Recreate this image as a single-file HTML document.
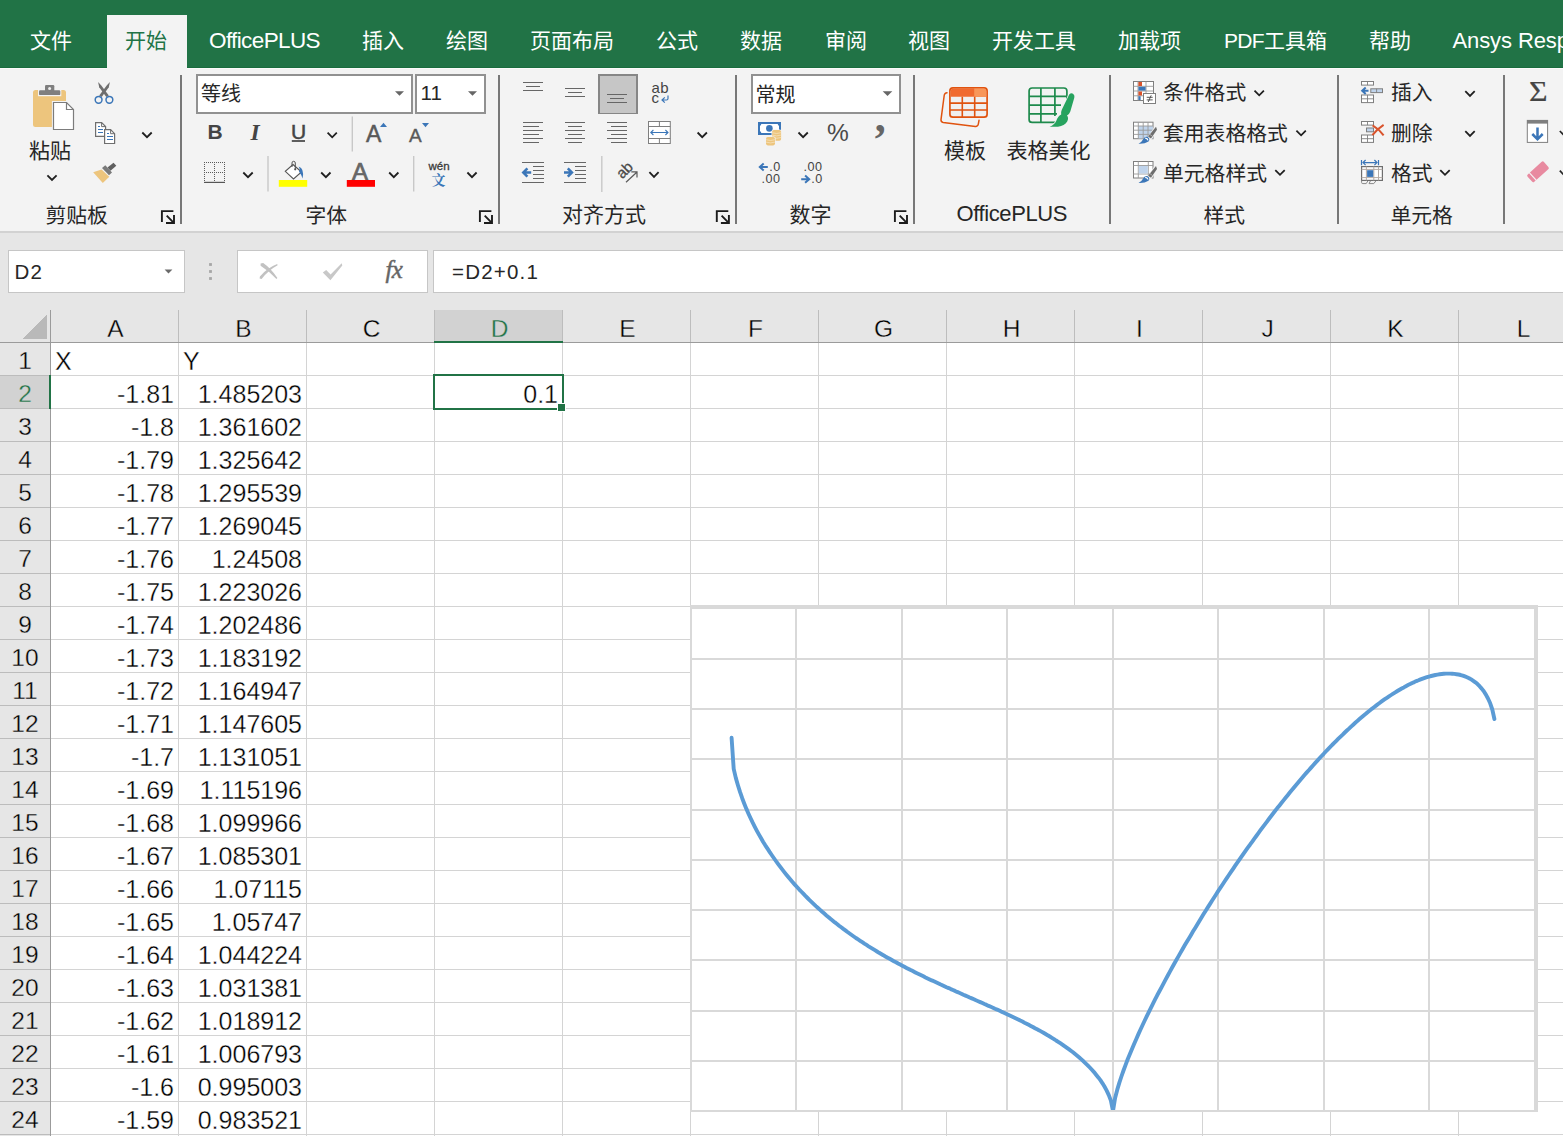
<!DOCTYPE html>
<html lang="zh-CN">
<head>
<meta charset="utf-8">
<title>Excel</title>
<style>
html,body{margin:0;padding:0;}
body{width:1563px;height:1136px;overflow:hidden;position:relative;background:#fff;
 font-family:"Liberation Sans","Noto Sans CJK SC",sans-serif;color:#262626;}
.abs{position:absolute;}
.t{position:absolute;white-space:nowrap;line-height:1;}
#tabbar{position:absolute;left:0;top:0;width:1563px;height:68px;background:#217346;}
#tabbar .tab{position:absolute;top:26.5px;font-size:21px;line-height:28px;color:#fff;white-space:nowrap;}
#acttab{position:absolute;left:107px;top:15px;width:80px;height:53px;background:#f3f3f3;}
#ribbon{position:absolute;left:0;top:68px;width:1563px;height:163px;background:#f3f3f3;}
#ribline{position:absolute;left:0;top:231px;width:1563px;height:2px;background:#d2d2d2;}
#fbar{position:absolute;left:0;top:233px;width:1563px;height:77px;background:#e6e6e6;}
.rt{position:absolute;white-space:nowrap;font-size:21px;line-height:28px;color:#262626;}
.gl{position:absolute;white-space:nowrap;font-size:20.8px;line-height:28px;color:#262626;}
.box{position:absolute;background:#fff;border:2px solid #919191;box-sizing:border-box;}
#grid{position:absolute;left:0;top:310px;width:1563px;height:826px;background:#fff;}
.ch{position:absolute;top:0;height:32px;font-size:24.5px;line-height:38px;text-align:center;color:#000;width:128px;}
.rh{position:absolute;left:0;width:50px;height:33px;font-size:24.5px;line-height:36px;text-align:center;color:#000;}
.c{position:absolute;height:33px;font-size:25px;line-height:36px;color:#000;white-space:nowrap;}
.r{text-align:right;}
.c{-webkit-text-stroke:0.35px #fff;}
.rh,.ch{-webkit-text-stroke:0.35px #e6e6e6;}
</style>
</head>
<body>
<div id="tabbar">
<div class="abs" style="left:0;top:67px;width:1563px;height:1px;background:#196c3d"></div>
<div id="acttab"></div>
<div class="tab" style="left:30px">文件</div>
<div class="tab" style="left:125px;color:#217346;top:27px">开始</div>
<div class="tab" style="left:209px;font-size:22.5px;letter-spacing:-0.62px">OfficePLUS</div>
<div class="tab" style="left:362px">插入</div>
<div class="tab" style="left:446px">绘图</div>
<div class="tab" style="left:530px">页面布局</div>
<div class="tab" style="left:656px">公式</div>
<div class="tab" style="left:740px">数据</div>
<div class="tab" style="left:825px">审阅</div>
<div class="tab" style="left:908px">视图</div>
<div class="tab" style="left:992px">开发工具</div>
<div class="tab" style="left:1118px">加载项</div>
<div class="tab" style="left:1224px"><span style="letter-spacing:-0.7px">PDF</span>工具箱</div>
<div class="tab" style="left:1369px">帮助</div>
<div class="tab" style="left:1452.5px;font-size:22px;letter-spacing:-0.1px">Ansys Response</div>
</div>
<div id="ribbon"></div>
<div class="abs" style="left:0;top:68px;width:107px;height:1px;background:#fbfbfb"></div><div class="abs" style="left:187px;top:68px;width:1376px;height:1px;background:#fbfbfb"></div>
<div id="ribline"></div>
<div id="fbar"></div>
<!-- ribbon text -->
<div class="rt" style="left:29px;top:137px">粘贴</div>
<div class="gl" style="left:45.5px;top:201.5px">剪贴板</div>
<div class="box" style="left:196px;top:74px;width:217px;height:40px"></div>
<div class="box" style="left:415px;top:74px;width:71px;height:40px"></div>
<div class="t" style="left:201px;top:80px;font-size:20px;line-height:28px;color:#262626">等线</div>
<div class="t" style="left:420.5px;top:79px;font-size:20.5px;line-height:28px;color:#262626">11</div>
<div class="t" style="left:207.5px;top:118px;font-size:21px;line-height:28px;font-weight:bold;color:#444">B</div>
<div class="t" style="left:250.5px;top:117.5px;font-size:23.5px;line-height:28px;font-weight:bold;font-style:italic;font-family:'Liberation Serif',serif;color:#444">I</div>
<div class="t" style="left:291px;top:118px;font-size:21px;line-height:28px;color:#444;-webkit-text-stroke:0.5px #444">U</div>
<div class="t" style="left:366px;top:120px;font-size:23px;line-height:28px;color:#595959;-webkit-text-stroke:0.5px #595959">A</div>
<div class="t" style="left:409px;top:122px;font-size:19px;line-height:28px;color:#595959;-webkit-text-stroke:0.4px #595959">A</div>
<div class="t" style="left:352px;top:158px;font-size:24px;line-height:28px;color:#666;-webkit-text-stroke:0.7px #666">A</div>
<div class="t" style="left:428.5px;top:159px;font-size:11.5px;line-height:14px;color:#3a3a3a;-webkit-text-stroke:0.3px #3a3a3a">wén</div>
<div class="t" style="left:431.5px;top:170px;font-size:14px;line-height:18px;font-weight:bold;color:#3b76b8;font-family:'Noto Serif CJK SC','Liberation Serif',serif">文</div>
<div class="gl" style="left:305.5px;top:201.5px">字体</div>
<div class="t" style="left:651.5px;top:79px;font-size:15px;line-height:18px;color:#444;letter-spacing:0.3px">ab</div>
<div class="t" style="left:651.5px;top:89px;font-size:15px;line-height:18px;color:#444">c</div>
<div class="gl" style="left:562px;top:201px;font-size:21px">对齐方式</div>
<div class="box" style="left:751px;top:74px;width:150px;height:40px"></div>
<div class="t" style="left:755.5px;top:81px;font-size:20px;line-height:28px;color:#262626">常规</div>
<div class="t" style="left:827px;top:119px;font-size:24.5px;line-height:28px;color:#4a4a4a">%</div>
<div class="t" style="left:874.8px;top:96px;font-size:44px;line-height:44px;font-weight:bold;font-family:'Liberation Serif',serif;color:#666">,</div>
<div class="gl" style="left:789.5px;top:201px;font-size:21px">数字</div>
<div class="rt" style="left:944px;top:137px">模板</div>
<div class="rt" style="left:1006.5px;top:137px">表格美化</div>
<div class="gl" style="left:956.5px;top:200px;font-size:22px;letter-spacing:-0.4px">OfficePLUS</div>
<div class="rt" style="left:1163px;top:79px;font-size:20.8px">条件格式</div>
<div class="rt" style="left:1163px;top:120px;font-size:20.8px">套用表格格式</div>
<div class="rt" style="left:1163px;top:160px;font-size:20.8px">单元格样式</div>
<div class="gl" style="left:1203.5px;top:201.5px">样式</div>
<div class="rt" style="left:1391px;top:79px;font-size:20.8px">插入</div>
<div class="rt" style="left:1391px;top:120px;font-size:20.8px">删除</div>
<div class="rt" style="left:1391px;top:160px;font-size:20.8px">格式</div>
<div class="gl" style="left:1390.5px;top:201.5px">单元格</div>
<div class="t" style="left:1528.5px;top:74.5px;font-size:29px;line-height:32px;color:#444;-webkit-text-stroke:0.2px #444;transform:scaleX(1.1);transform-origin:0 0;font-family:'Liberation Serif',serif">Σ</div>
<!-- formula bar -->
<div class="abs" style="left:8px;top:250px;width:177px;height:43px;background:#fff;border:1px solid #c6c6c6;box-sizing:border-box"></div>
<div class="t" style="left:14.5px;top:258px;font-size:20.5px;line-height:28px;color:#262626;letter-spacing:1.2px">D2</div>
<div class="abs" style="left:237px;top:250px;width:191px;height:43px;background:#fff;border:1px solid #c6c6c6;box-sizing:border-box"></div>
<div class="abs" style="left:433px;top:250px;width:1140px;height:43px;background:#fff;border:1px solid #c6c6c6;box-sizing:border-box"></div>
<div class="t" style="left:452px;top:258px;font-size:20.5px;line-height:28px;color:#262626;letter-spacing:1.2px">=D2+0.1</div>
<div class="t" style="left:385.5px;top:254.5px;font-size:25px;line-height:30px;color:#666;font-family:'Liberation Serif',serif;font-style:italic;-webkit-text-stroke:0.45px #666;letter-spacing:-0.6px">fx</div>
<svg class="abs" style="left:0;top:0" width="1563" height="310" viewBox="0 0 1563 310">
<rect x="180" y="75" width="2" height="149" fill="#777" shape-rendering="crispEdges"/>
<rect x="498" y="75" width="2" height="149" fill="#777" shape-rendering="crispEdges"/>
<rect x="735" y="75" width="2" height="149" fill="#777" shape-rendering="crispEdges"/>
<rect x="913" y="75" width="2" height="149" fill="#777" shape-rendering="crispEdges"/>
<rect x="1109" y="75" width="2" height="149" fill="#777" shape-rendering="crispEdges"/>
<rect x="1337" y="75" width="2" height="149" fill="#777" shape-rendering="crispEdges"/>
<rect x="1503" y="75" width="2" height="149" fill="#777" shape-rendering="crispEdges"/>
<line x1="352.3" y1="116.5" x2="352.3" y2="151.5" stroke="#c8c8c8" stroke-width="1.4"/>
<line x1="268" y1="156" x2="268" y2="191.5" stroke="#c8c8c8" stroke-width="1.4"/>
<line x1="413.7" y1="156" x2="413.7" y2="191.5" stroke="#c8c8c8" stroke-width="1.4"/>
<line x1="601.8" y1="156" x2="601.8" y2="192" stroke="#c8c8c8" stroke-width="1.4"/>
<path d="M161.9,222.1 V211.1 H173.4" fill="none" stroke="#1c1c1c" stroke-width="1.9"/>
<path d="M166.7,215.7 L173.8,222.8 M166.0,223.0 H174.0 V215.0" fill="none" stroke="#1c1c1c" stroke-width="1.9"/>
<path d="M479.9,222.1 V211.1 H491.4" fill="none" stroke="#1c1c1c" stroke-width="1.9"/>
<path d="M484.7,215.7 L491.8,222.8 M484.0,223.0 H492.0 V215.0" fill="none" stroke="#1c1c1c" stroke-width="1.9"/>
<path d="M716.8,222.1 V211.1 H728.3" fill="none" stroke="#1c1c1c" stroke-width="1.9"/>
<path d="M721.6,215.7 L728.7,222.8 M720.9,223.0 H728.9 V215.0" fill="none" stroke="#1c1c1c" stroke-width="1.9"/>
<path d="M894.9,222.1 V211.1 H906.4" fill="none" stroke="#1c1c1c" stroke-width="1.9"/>
<path d="M899.7,215.7 L906.8,222.8 M899.0,223.0 H907.0 V215.0" fill="none" stroke="#1c1c1c" stroke-width="1.9"/>
<rect x="33" y="90" width="33" height="37" rx="2.5" fill="#edc57d"/>
<rect x="38" y="89" width="23.3" height="7.2" fill="#f3f3f3"/>
<rect x="39" y="90.3" width="21.3" height="4.8" rx="1.2" fill="#7f7f7f"/><rect x="45" y="85" width="9.3" height="7" rx="1.2" fill="#7f7f7f"/><circle cx="49.6" cy="88.5" r="1.5" fill="#f0f0f0"/>
<path d="M53.5,102.5 H66.5 L73.5,109.5 V129.5 H53.5 Z" fill="#fff" stroke="#f3f3f3" stroke-width="3.2"/>
<path d="M53.5,102.5 H66.5 L73.5,109.5 V129.5 H53.5 Z" fill="#fff" stroke="#7c7c7c" stroke-width="1.2"/><path d="M66.5,102.5 V109.5 H73.5" fill="none" stroke="#7c7c7c" stroke-width="1.2"/>
<polyline points="47.4,175.3 52.0,180.0 56.6,175.3" fill="none" stroke="#1f1f1f" stroke-width="1.8"/>
<path d="M98.1,82.1 L101.3,85.6 L108.8,95.6 L106.3,97 L99.2,87.3 Z" fill="#6e6e6e"/>
<path d="M109.9,82.1 L106.7,85.6 L99.2,95.6 L101.7,97 L108.8,87.3 Z" fill="#6e6e6e"/>
<circle cx="98.6" cy="99.8" r="3.4" fill="none" stroke="#3b76b8" stroke-width="1.5"/><circle cx="109.4" cy="99.8" r="3.4" fill="none" stroke="#3b76b8" stroke-width="1.5"/>
<path d="M95.6,122.6 H101.6 L105.6,126.6 V136.4 H95.6 Z" fill="#fff" stroke="#6e6e6e" stroke-width="1.2"/><path d="M101.6,122.6 V126.6 H105.6" fill="none" stroke="#6e6e6e" stroke-width="1"/>
<line x1="97.5" y1="126.5" x2="100" y2="126.5" stroke="#3b76b8" stroke-width="1" shape-rendering="crispEdges"/>
<line x1="97.5" y1="129.5" x2="103.2" y2="129.5" stroke="#3b76b8" stroke-width="1" shape-rendering="crispEdges"/>
<line x1="97.5" y1="132.5" x2="103.2" y2="132.5" stroke="#3b76b8" stroke-width="1" shape-rendering="crispEdges"/>
<path d="M104.6,129.7 H110.6 L114.6,133.7 V143.5 H104.6 Z" fill="#fff" stroke="#6e6e6e" stroke-width="1.2"/><path d="M110.6,129.7 V133.7 H114.6" fill="none" stroke="#6e6e6e" stroke-width="1"/>
<line x1="106.5" y1="133.5" x2="109" y2="133.5" stroke="#3b76b8" stroke-width="1" shape-rendering="crispEdges"/>
<line x1="106.5" y1="136.5" x2="112.5" y2="136.5" stroke="#3b76b8" stroke-width="1" shape-rendering="crispEdges"/>
<line x1="106.5" y1="139.5" x2="112.5" y2="139.5" stroke="#3b76b8" stroke-width="1" shape-rendering="crispEdges"/>
<polyline points="142.3,132.5 147.0,137.2 151.7,132.5" fill="none" stroke="#1f1f1f" stroke-width="1.8"/>
<path d="M93.2,172.3 L101.5,169.5 L109.3,176.8 L102.8,183 Z" fill="#edc57d"/>
<path d="M102,168 L105.3,165.3 L112,172.5 L109,175.3 Z" fill="#7a7a7a"/>
<path d="M107.5,167.5 L113.5,162.8 L116.3,165.8 L110.5,170.8 Z" fill="#5f5f5f"/>
<polygon points="395,91.2 404,91.2 399.5,95.8" fill="#666"/>
<polygon points="468,91.2 477,91.2 472.5,95.8" fill="#666"/>
<line x1="291.8" y1="141" x2="305" y2="141" stroke="#444" stroke-width="1.7"/>
<polyline points="327.6,132.7 332.2,137.3 336.8,132.7" fill="none" stroke="#1f1f1f" stroke-width="1.8"/>
<polygon points="380,127 387,127 383.5,122.8" fill="#3b76b8"/>
<polygon points="422,123 429,123 425.5,127.2" fill="#3b76b8"/>
<g stroke="#5a5a5a" stroke-width="1" stroke-dasharray="1 1" fill="none" shape-rendering="crispEdges"><path d="M204,162.5 H225 M204,172.5 H225 M204.5,162 V182 M214.5,162 V182 M224.5,162 V182"/></g>
<line x1="204" y1="182.4" x2="225" y2="182.4" stroke="#555" stroke-width="1.2"/>
<polyline points="243.3,172.5 248.0,177.2 252.7,172.5" fill="none" stroke="#1f1f1f" stroke-width="1.8"/>
<rect x="278.8" y="180" width="28.4" height="6.8" fill="#ffff00"/>
<path d="M293,164.5 L301.5,172 L293.5,179 L285.3,171.3 Z" fill="#fff" stroke="#555" stroke-width="1.1"/>
<path d="M292,167 V163 Q292,161.3 293.6,161.3 Q295.3,161.3 295.3,163 V169" fill="none" stroke="#555" stroke-width="1"/>
<circle cx="295.2" cy="169.3" r="1.1" fill="#555"/>
<path d="M298.6,166.6 Q304.6,168.6 302.6,178.4 Q301.2,174.5 299,171.6 Q300.5,169.5 298.6,166.6 Z" fill="#3b76b8"/>
<polyline points="321.2,172.5 325.9,177.2 330.5,172.5" fill="none" stroke="#1f1f1f" stroke-width="1.8"/>
<rect x="346.8" y="180" width="28.2" height="6.8" fill="#ff0000"/>
<polyline points="389.2,172.5 393.8,177.2 398.4,172.5" fill="none" stroke="#1f1f1f" stroke-width="1.8"/>
<polyline points="467.4,172.5 472.0,177.2 476.6,172.5" fill="none" stroke="#1f1f1f" stroke-width="1.8"/>
<g shape-rendering="crispEdges">
<line x1="523" y1="82.5" x2="543" y2="82.5" stroke="#666" stroke-width="1"/>
<line x1="526" y1="86.5" x2="540" y2="86.5" stroke="#666" stroke-width="1"/>
<line x1="523" y1="90.5" x2="543" y2="90.5" stroke="#666" stroke-width="1"/>
<line x1="565" y1="88.5" x2="585" y2="88.5" stroke="#666" stroke-width="1"/>
<line x1="568" y1="92.5" x2="582" y2="92.5" stroke="#666" stroke-width="1"/>
<line x1="565" y1="96.5" x2="585" y2="96.5" stroke="#666" stroke-width="1"/>
<rect x="598.8" y="74.8" width="38.4" height="38.6" fill="#c6c6c6" stroke="#868686" stroke-width="1.6"/>
<line x1="607" y1="94.5" x2="627" y2="94.5" stroke="#666" stroke-width="1"/>
<line x1="610" y1="98.5" x2="624" y2="98.5" stroke="#666" stroke-width="1"/>
<line x1="607" y1="102.5" x2="627" y2="102.5" stroke="#666" stroke-width="1"/>
<line x1="523" y1="122.5" x2="543" y2="122.5" stroke="#666" stroke-width="1"/>
<line x1="565" y1="122.5" x2="585" y2="122.5" stroke="#666" stroke-width="1"/>
<line x1="607" y1="122.5" x2="627" y2="122.5" stroke="#666" stroke-width="1"/>
<line x1="523" y1="126.5" x2="539" y2="126.5" stroke="#666" stroke-width="1"/>
<line x1="568" y1="126.5" x2="582" y2="126.5" stroke="#666" stroke-width="1"/>
<line x1="611" y1="126.5" x2="627" y2="126.5" stroke="#666" stroke-width="1"/>
<line x1="523" y1="130.5" x2="543" y2="130.5" stroke="#666" stroke-width="1"/>
<line x1="565" y1="130.5" x2="585" y2="130.5" stroke="#666" stroke-width="1"/>
<line x1="607" y1="130.5" x2="627" y2="130.5" stroke="#666" stroke-width="1"/>
<line x1="523" y1="134.5" x2="539" y2="134.5" stroke="#666" stroke-width="1"/>
<line x1="568" y1="134.5" x2="582" y2="134.5" stroke="#666" stroke-width="1"/>
<line x1="611" y1="134.5" x2="627" y2="134.5" stroke="#666" stroke-width="1"/>
<line x1="523" y1="138.5" x2="543" y2="138.5" stroke="#666" stroke-width="1"/>
<line x1="565" y1="138.5" x2="585" y2="138.5" stroke="#666" stroke-width="1"/>
<line x1="607" y1="138.5" x2="627" y2="138.5" stroke="#666" stroke-width="1"/>
<line x1="523" y1="142.5" x2="539" y2="142.5" stroke="#666" stroke-width="1"/>
<line x1="568" y1="142.5" x2="582" y2="142.5" stroke="#666" stroke-width="1"/>
<line x1="611" y1="142.5" x2="627" y2="142.5" stroke="#666" stroke-width="1"/>
<line x1="522" y1="162.5" x2="544" y2="162.5" stroke="#666" stroke-width="1"/>
<line x1="564" y1="162.5" x2="586" y2="162.5" stroke="#666" stroke-width="1"/>
<line x1="533" y1="166.5" x2="544" y2="166.5" stroke="#666" stroke-width="1"/>
<line x1="575" y1="166.5" x2="586" y2="166.5" stroke="#666" stroke-width="1"/>
<line x1="533" y1="170.5" x2="544" y2="170.5" stroke="#666" stroke-width="1"/>
<line x1="575" y1="170.5" x2="586" y2="170.5" stroke="#666" stroke-width="1"/>
<line x1="533" y1="174.5" x2="544" y2="174.5" stroke="#666" stroke-width="1"/>
<line x1="575" y1="174.5" x2="586" y2="174.5" stroke="#666" stroke-width="1"/>
<line x1="533" y1="178.5" x2="544" y2="178.5" stroke="#666" stroke-width="1"/>
<line x1="575" y1="178.5" x2="586" y2="178.5" stroke="#666" stroke-width="1"/>
<line x1="522" y1="182.5" x2="544" y2="182.5" stroke="#666" stroke-width="1"/>
<line x1="564" y1="182.5" x2="586" y2="182.5" stroke="#666" stroke-width="1"/>
</g>
<path d="M668,95.5 V98.5 Q668,100 666.5,100 H662.2 M664.8,97.4 L662,100 L664.8,102.6" fill="none" stroke="#3b76b8" stroke-width="1.2"/>
<rect x="648.5" y="121.5" width="21.8" height="22" fill="#fff" stroke="#7f7f7f" stroke-width="1"/>
<path d="M648.5,126.5 H670.3 M648.5,138.5 H670.3 M659.4,121.5 V126.5 M659.4,138.5 V143.5" stroke="#7f7f7f" stroke-width="1" fill="none"/>
<path d="M650.8,132.5 H668 M653.4,130 L650.8,132.5 L653.4,135 M665.4,130 L668,132.5 L665.4,135" stroke="#3b76b8" stroke-width="1.1" fill="none"/>
<polyline points="697.6,132.5 702.2,137.2 706.9,132.5" fill="none" stroke="#1f1f1f" stroke-width="1.8"/>
<path d="M521.5,172.5 L526.5,167.6 L528.3,169.3 L526.3,171.2 H531.2 V173.8 H526.3 L528.3,175.7 L526.5,177.4 Z" fill="#3b76b8"/>
<path d="M573.7,172.5 L568.7,167.6 L566.9,169.3 L568.9,171.2 H564 V173.8 H568.9 L566.9,175.7 L568.7,177.4 Z" fill="#3b76b8"/>
<g transform="translate(618.6,176) rotate(-45)"><text x="0" y="5" font-size="15" fill="#4a4a4a" stroke="#4a4a4a" stroke-width="0.3" font-family="Liberation Sans, sans-serif">ab</text></g>
<path d="M626,182.3 L636.8,172.2 M631.3,171.9 H637 V177.6" fill="none" stroke="#5a5a5a" stroke-width="1.2"/>
<polyline points="649.4,172.2 654.0,176.9 658.6,172.2" fill="none" stroke="#1f1f1f" stroke-width="1.8"/>
<polygon points="882.7,91.2 892.3000000000001,91.2 887.5,96.0" fill="#666"/>
<rect x="758" y="122" width="23" height="13" fill="#3b76b8"/>
<path d="M761.3,124 H777.7 Q777.9,125.6 779,125.7 V131.3 Q777.9,131.4 777.7,133 H761.3 Q761.1,131.4 760,131.3 V125.7 Q761.1,125.6 761.3,124 Z" fill="#fff"/>
<circle cx="769.4" cy="128.4" r="3.3" fill="#3b76b8"/>
<rect x="771.5" y="129.4" width="10.2" height="11.999999999999998" rx="2" fill="#f3f3f3"/>
<rect x="772.1" y="130" width="9" height="10.799999999999999" rx="1.8" fill="#edc57d"/>
<path d="M772.1,132.70000000000002 Q776.6,134.3 781.1,132.70000000000002" fill="none" stroke="#f8e7c6" stroke-width="0.7"/>
<path d="M772.1,135.10000000000002 Q776.6,136.70000000000002 781.1,135.10000000000002" fill="none" stroke="#f8e7c6" stroke-width="0.7"/>
<path d="M772.1,137.5 Q776.6,139.1 781.1,137.5" fill="none" stroke="#f8e7c6" stroke-width="0.7"/>
<rect x="765.4" y="136.4" width="10.2" height="9.599999999999998" rx="2" fill="#f3f3f3"/>
<rect x="766" y="137" width="9" height="8.399999999999999" rx="1.8" fill="#edc57d"/>
<path d="M766,139.70000000000002 Q770.5,141.3 775,139.70000000000002" fill="none" stroke="#f8e7c6" stroke-width="0.7"/>
<path d="M766,142.10000000000002 Q770.5,143.70000000000002 775,142.10000000000002" fill="none" stroke="#f8e7c6" stroke-width="0.7"/>
<polyline points="798.5,132.5 803.1,137.2 807.8,132.5" fill="none" stroke="#1f1f1f" stroke-width="1.8"/>
<text x="769.3" y="170.8" font-size="12.6" fill="#444" letter-spacing="0.5" font-family="Liberation Sans, sans-serif">.0</text>
<text x="761.6" y="182.8" font-size="12.6" fill="#444" letter-spacing="0.5" font-family="Liberation Sans, sans-serif">.00</text>
<path d="M767.8,167 H760 M763.7,163.4 L759.8,167 L763.7,170.6" fill="none" stroke="#3b76b8" stroke-width="2"/>
<text x="803.6" y="170.8" font-size="12.6" fill="#444" letter-spacing="0.5" font-family="Liberation Sans, sans-serif">.00</text>
<text x="811.3" y="182.8" font-size="12.6" fill="#444" letter-spacing="0.5" font-family="Liberation Sans, sans-serif">.0</text>
<path d="M801.2,179.2 H809 M805.1,175.6 L809.2,179.2 L805.1,182.8" fill="none" stroke="#3b76b8" stroke-width="2"/>
<path d="M947,92.8 Q944.6,93 944.2,95.5 L941,119.6 Q940.8,122 943.2,122.4 L975.3,126.4 Q977.8,126.6 978.3,124.2 L979,120.3" fill="none" stroke="#e0530f" stroke-width="1.5" stroke-linecap="round"/>
<rect x="949.9" y="87.8" width="37.2" height="29.4" rx="3" fill="#f0f0f0" stroke="#e0530f" stroke-width="1.7"/>
<path d="M950.7,96.8 V91 Q950.7,88.6 953.2,88.6 H983.8 Q986.3,88.6 986.3,91 V96.8 Z" fill="#f06a2f"/>
<path d="M974.2,88.6 H983.8 Q986.3,88.6 986.3,91 V96.8 H974.2 Z" fill="#f8975a"/>
<path d="M950,103.1 H987 M950,110 H987 M962.3,96.8 V117 M974.7,96.8 V117" stroke="#e0530f" stroke-width="1.6" fill="none"/>
<rect x="1029.1" y="88" width="37.8" height="34.4" rx="3" fill="none" stroke="#1e8a4c" stroke-width="1.7"/>
<path d="M1029,96.3 H1066 M1029,105.1 H1061 M1029,113.9 H1057 M1040.9,88 V122.4 M1054.9,88 V116" stroke="#1e8a4c" stroke-width="1.7" fill="none"/>
<path d="M1069.2,94.5 Q1071.2,92.4 1073.3,93.9 Q1075,95.3 1074.3,97.8 L1070.3,111.5 Q1069.2,114.5 1067,115.5 Q1069,118 1067.2,121.6 Q1064.5,126 1058,126.8 L1049.6,126.8 Q1054.5,125 1056.3,120.8 Q1057.8,116 1061.2,114.4 Q1060.6,112.5 1061.8,109.8 Z" fill="#27a35f" stroke="#f3f3f3" stroke-width="1.6" paint-order="stroke"/>
<rect x="1133.5" y="81.5" width="20" height="19" fill="#fff" stroke="#7f7f7f" stroke-width="1"/>
<path d="M1133.5,86.3 H1153.5 M1133.5,91 H1153.5 M1133.5,95.8 H1153.5 M1138,81.5 V100.5 M1146,81.5 V100.5" stroke="#9a9a9a" stroke-width="0.9" fill="none"/>
<rect x="1138.4" y="82" width="3.6" height="4" fill="#d9532c"/><rect x="1138.4" y="86.8" width="7.2" height="3.8" fill="#3b76b8"/><rect x="1138.4" y="91.5" width="3.6" height="4" fill="#d9532c"/><rect x="1138.4" y="96.2" width="2.2" height="3.8" fill="#3b76b8"/>
<rect x="1143.5" y="93.5" width="12" height="10" fill="#fff" stroke="#7f7f7f" stroke-width="1"/>
<path d="M1146.7,97.3 H1152.7 M1146.7,99.9 H1152.7 M1151.2,95.3 L1148.2,102" stroke="#444" stroke-width="0.9" fill="none"/>
<polyline points="1254.5,90.7 1259.2,95.3 1263.9,90.7" fill="none" stroke="#1f1f1f" stroke-width="1.8"/>
<rect x="1133.5" y="122.2" width="19.5" height="16.5" fill="#fff" stroke="#7f7f7f" stroke-width="1"/>
<rect x="1138.3" y="126" width="14.5" height="12.4" fill="#c0d4ec"/>
<path d="M1133.5,126 H1153 M1133.5,130.2 H1153 M1133.5,134.4 H1153 M1138.3,122.2 V138.7 M1143.2,122.2 V138.7 M1148,122.2 V138.7" stroke="#9a9a9a" stroke-width="0.9" fill="none"/>
<path d="M1146.6,138.9 L1154.6,126.5 L1158,129 L1150,142 Z" fill="#f3f3f3"/>
<path d="M1156,126.8 L1157,129.8 L1151,138.6 L1148.1,136.5 Z" fill="#6e6e6e"/>
<path d="M1149.6,134.2 L1152.6,136.4" stroke="#c8c8c8" stroke-width="0.7" fill="none"/>
<path d="M1147.8,137 Q1150.5,138.8 1148.5,141.5 Q1144.5,144.2 1138.5,143.8 Q1142,141.8 1143.3,139 Q1145,136.2 1147.8,137 Z" fill="#3b76b8"/>
<path d="M1145.2,138.2 Q1147.6,138.4 1148,140.3" stroke="#fff" stroke-width="1.2" fill="none"/>
<polyline points="1296.4,130.7 1301.1,135.3 1305.8,130.7" fill="none" stroke="#1f1f1f" stroke-width="1.8"/>
<rect x="1133.5" y="161.5" width="19.5" height="16.5" fill="#fff" stroke="#7f7f7f" stroke-width="1"/>
<path d="M1133.5,165.5 H1153 M1133.5,174 H1153 M1138.3,161.5 V178 M1148.3,161.5 V178" stroke="#9a9a9a" stroke-width="0.9" fill="none"/>
<rect x="1138.8" y="166" width="9" height="7.5" fill="#c0d4ec"/>
<path d="M1146.6,178.1 L1154.6,165.7 L1158,168.2 L1150,181.2 Z" fill="#f3f3f3"/>
<path d="M1156,166.0 L1157,169.0 L1151,177.8 L1148.1,175.7 Z" fill="#6e6e6e"/>
<path d="M1149.6,173.39999999999998 L1152.6,175.60000000000002" stroke="#c8c8c8" stroke-width="0.7" fill="none"/>
<path d="M1147.8,176.2 Q1150.5,178.0 1148.5,180.7 Q1144.5,183.39999999999998 1138.5,183.0 Q1142,181.0 1143.3,178.2 Q1145,175.39999999999998 1147.8,176.2 Z" fill="#3b76b8"/>
<path d="M1145.2,177.39999999999998 Q1147.6,177.60000000000002 1148,179.5" stroke="#fff" stroke-width="1.2" fill="none"/>
<polyline points="1275.3,170.1 1280.0,174.8 1284.7,170.1" fill="none" stroke="#1f1f1f" stroke-width="1.8"/>
<rect x="1361.5" y="81.5" width="12" height="3.6" fill="#fff" stroke="#7f7f7f" stroke-width="1"/>
<path d="M1367.5,81.5 V85.1 " stroke="#7f7f7f" stroke-width="0.9" fill="none"/>
<rect x="1370.8" y="88.8" width="11.7" height="3.8" fill="#c0d4ec" stroke="#7f7f7f" stroke-width="1"/>
<path d="M1376.6,88.8 V92.6 " stroke="#7f7f7f" stroke-width="0.9" fill="none"/>
<rect x="1361.5" y="95" width="12" height="7.6" fill="#fff" stroke="#7f7f7f" stroke-width="1"/>
<path d="M1367.5,95 V102.6 M1361.5,98.8 H1373.5 " stroke="#7f7f7f" stroke-width="0.9" fill="none"/>
<path d="M1368.5,90.7 H1362.8 M1365.7,87.5 L1362.2,90.7 L1365.7,93.9" fill="none" stroke="#3b76b8" stroke-width="2"/>
<polyline points="1465.3,91.2 1470.0,95.9 1474.7,91.2" fill="none" stroke="#1f1f1f" stroke-width="1.8"/>
<rect x="1361.5" y="121.5" width="12" height="3.6" fill="#fff" stroke="#7f7f7f" stroke-width="1"/>
<path d="M1367.5,121.5 V125.1 " stroke="#7f7f7f" stroke-width="0.9" fill="none"/>
<rect x="1366.5" y="128" width="7" height="3.8" fill="#c0d4ec" stroke="#7f7f7f" stroke-width="1"/>
<rect x="1361.5" y="135" width="12" height="7.4" fill="#fff" stroke="#7f7f7f" stroke-width="1"/>
<path d="M1367.5,135 V142.4 M1361.5,138.7 H1373.5 " stroke="#7f7f7f" stroke-width="0.9" fill="none"/>
<path d="M1372.6,125.3 Q1379,129 1383.6,135.4 M1383.6,124.8 Q1377,129 1372.4,135.2" stroke="#d9532c" stroke-width="2" fill="none"/>
<polyline points="1465.3,131.2 1470.0,135.9 1474.7,131.2" fill="none" stroke="#1f1f1f" stroke-width="1.8"/>
<path d="M1361.5,160 V165.2 M1378.5,160 V165.2 M1363,162.6 H1377 M1365.6,160 L1363,162.6 L1365.6,165.2 M1374.4,160 L1377,162.6 L1374.4,165.2" stroke="#3b76b8" stroke-width="1.2" fill="none"/>
<rect x="1361.6" y="166.6" width="20.8" height="13.8" fill="#fff" stroke="#6e6e6e" stroke-width="1.2"/>
<path d="M1366.4,166.6 V180.4 M1373.8,166.6 V180.4 M1378.5,166.6 V180.4 M1361.6,169.4 H1382.4 M1361.6,177.6 H1382.4" stroke="#b4aca6" stroke-width="1" fill="none"/>
<rect x="1367.1" y="170.2" width="6.1" height="6.7" fill="#3b76b8"/>
<path d="M1361.6,180.4 V182.4 Q1361.6,183.6 1362.8,183.6 H1366.2 L1367.8,181 M1369,183.6 H1373.8 L1375.8,181 M1369,183.6 L1370.4,181" stroke="#8a8a8a" stroke-width="1" fill="none"/>
<polyline points="1440.3,170.1 1445.0,174.8 1449.7,170.1" fill="none" stroke="#1f1f1f" stroke-width="1.8"/>
<rect x="1527.3" y="120.4" width="20.3" height="22" fill="#fff" stroke="#7f7f7f" stroke-width="1"/><rect x="1527" y="120" width="21" height="3.6" fill="#7f7f7f"/>
<path d="M1537.5,127.5 V139 M1532.3,134 L1537.5,139.3 L1542.7,134" fill="none" stroke="#3b76b8" stroke-width="2.5"/>
<path d="M1559.8,131 L1564,135.4" stroke="#262626" stroke-width="1.7" fill="none"/>
<path d="M1559.8,170.6 L1564,175" stroke="#262626" stroke-width="1.7" fill="none"/>
<g transform="translate(1538,171.8) rotate(-42)"><rect x="-11" y="-4.9" width="22" height="9.8" rx="1.6" fill="#e88aa0"/><rect x="-7.6" y="-5.6" width="1.2" height="11.2" fill="#f3f3f3"/></g>
<polygon points="164.6,269.4 172.4,269.4 168.5,273.4" fill="#6a6a6a"/>
<rect x="209.1" y="263.1" width="2.8" height="2.8" fill="#a6a6a6"/>
<rect x="209.1" y="270.1" width="2.8" height="2.8" fill="#a6a6a6"/>
<rect x="209.1" y="277.1" width="2.8" height="2.8" fill="#a6a6a6"/>
<path d="M260.6,263.6 L263.2,263.1 Q271,268.5 277.4,278 L276.4,278.9 Q268.5,270.8 260.6,265.8 Z" fill="#c2c2c2"/>
<path d="M277.2,264 L277.6,265.3 Q268.5,270.3 261.6,278.9 L259.6,278.4 L259.9,276.4 Q267,268 277.2,264 Z" fill="#c2c2c2"/>
<path d="M322.8,272.4 L326.2,269.9 L330.6,274.6 L341.7,263.2 L342.3,265.6 L330.4,280.3 Z" fill="#c8c8c8"/>
</svg>
<div id="grid">
<div class="abs" style="left:0;top:0;width:1563px;height:32px;background:#e6e6e6"></div>
<div class="abs" style="left:0;top:32px;width:50px;height:794px;background:#e6e6e6"></div>
<div class="abs" style="left:434px;top:0;width:129px;height:32px;background:#d2d2d2"></div>
<div class="abs" style="left:0;top:66px;width:50px;height:33px;background:#d2d2d2"></div>
<svg class="abs" style="left:0;top:0" width="1563" height="826" viewBox="0 310 1563 826" shape-rendering="crispEdges"><rect x="178" y="343" width="1" height="793" fill="#d4d4d4"/><rect x="306" y="343" width="1" height="793" fill="#d4d4d4"/><rect x="434" y="343" width="1" height="793" fill="#d4d4d4"/><rect x="562" y="343" width="1" height="793" fill="#d4d4d4"/><rect x="690" y="343" width="1" height="793" fill="#d4d4d4"/><rect x="818" y="343" width="1" height="793" fill="#d4d4d4"/><rect x="946" y="343" width="1" height="793" fill="#d4d4d4"/><rect x="1074" y="343" width="1" height="793" fill="#d4d4d4"/><rect x="1202" y="343" width="1" height="793" fill="#d4d4d4"/><rect x="1330" y="343" width="1" height="793" fill="#d4d4d4"/><rect x="1458" y="343" width="1" height="793" fill="#d4d4d4"/><rect x="51" y="375" width="1512" height="1" fill="#d4d4d4"/><rect x="0" y="375" width="50" height="1" fill="#bcbcbc"/><rect x="51" y="408" width="1512" height="1" fill="#d4d4d4"/><rect x="0" y="408" width="50" height="1" fill="#bcbcbc"/><rect x="51" y="441" width="1512" height="1" fill="#d4d4d4"/><rect x="0" y="441" width="50" height="1" fill="#bcbcbc"/><rect x="51" y="474" width="1512" height="1" fill="#d4d4d4"/><rect x="0" y="474" width="50" height="1" fill="#bcbcbc"/><rect x="51" y="507" width="1512" height="1" fill="#d4d4d4"/><rect x="0" y="507" width="50" height="1" fill="#bcbcbc"/><rect x="51" y="540" width="1512" height="1" fill="#d4d4d4"/><rect x="0" y="540" width="50" height="1" fill="#bcbcbc"/><rect x="51" y="573" width="1512" height="1" fill="#d4d4d4"/><rect x="0" y="573" width="50" height="1" fill="#bcbcbc"/><rect x="51" y="606" width="1512" height="1" fill="#d4d4d4"/><rect x="0" y="606" width="50" height="1" fill="#bcbcbc"/><rect x="51" y="639" width="1512" height="1" fill="#d4d4d4"/><rect x="0" y="639" width="50" height="1" fill="#bcbcbc"/><rect x="51" y="672" width="1512" height="1" fill="#d4d4d4"/><rect x="0" y="672" width="50" height="1" fill="#bcbcbc"/><rect x="51" y="705" width="1512" height="1" fill="#d4d4d4"/><rect x="0" y="705" width="50" height="1" fill="#bcbcbc"/><rect x="51" y="738" width="1512" height="1" fill="#d4d4d4"/><rect x="0" y="738" width="50" height="1" fill="#bcbcbc"/><rect x="51" y="771" width="1512" height="1" fill="#d4d4d4"/><rect x="0" y="771" width="50" height="1" fill="#bcbcbc"/><rect x="51" y="804" width="1512" height="1" fill="#d4d4d4"/><rect x="0" y="804" width="50" height="1" fill="#bcbcbc"/><rect x="51" y="837" width="1512" height="1" fill="#d4d4d4"/><rect x="0" y="837" width="50" height="1" fill="#bcbcbc"/><rect x="51" y="870" width="1512" height="1" fill="#d4d4d4"/><rect x="0" y="870" width="50" height="1" fill="#bcbcbc"/><rect x="51" y="903" width="1512" height="1" fill="#d4d4d4"/><rect x="0" y="903" width="50" height="1" fill="#bcbcbc"/><rect x="51" y="936" width="1512" height="1" fill="#d4d4d4"/><rect x="0" y="936" width="50" height="1" fill="#bcbcbc"/><rect x="51" y="969" width="1512" height="1" fill="#d4d4d4"/><rect x="0" y="969" width="50" height="1" fill="#bcbcbc"/><rect x="51" y="1002" width="1512" height="1" fill="#d4d4d4"/><rect x="0" y="1002" width="50" height="1" fill="#bcbcbc"/><rect x="51" y="1035" width="1512" height="1" fill="#d4d4d4"/><rect x="0" y="1035" width="50" height="1" fill="#bcbcbc"/><rect x="51" y="1068" width="1512" height="1" fill="#d4d4d4"/><rect x="0" y="1068" width="50" height="1" fill="#bcbcbc"/><rect x="51" y="1101" width="1512" height="1" fill="#d4d4d4"/><rect x="0" y="1101" width="50" height="1" fill="#bcbcbc"/><rect x="51" y="1134" width="1512" height="1" fill="#d4d4d4"/><rect x="0" y="1134" width="50" height="1" fill="#bcbcbc"/><rect x="178" y="310" width="1" height="32" fill="#bdbdbd"/><rect x="306" y="310" width="1" height="32" fill="#bdbdbd"/><rect x="434" y="310" width="1" height="32" fill="#bdbdbd"/><rect x="562" y="310" width="1" height="32" fill="#bdbdbd"/><rect x="690" y="310" width="1" height="32" fill="#bdbdbd"/><rect x="818" y="310" width="1" height="32" fill="#bdbdbd"/><rect x="946" y="310" width="1" height="32" fill="#bdbdbd"/><rect x="1074" y="310" width="1" height="32" fill="#bdbdbd"/><rect x="1202" y="310" width="1" height="32" fill="#bdbdbd"/><rect x="1330" y="310" width="1" height="32" fill="#bdbdbd"/><rect x="1458" y="310" width="1" height="32" fill="#bdbdbd"/><rect x="0" y="342" width="1563" height="1" fill="#9b9b9b"/><rect x="50" y="310" width="1" height="826" fill="#9b9b9b"/><polygon points="47,314 47,339 22,339" fill="#b9b9b9"/><rect x="434" y="341" width="129" height="2" fill="#217346"/><rect x="49" y="375" width="2" height="34" fill="#217346"/></svg>
<div class="ch" style="left:51.5px">A</div>
<div class="ch" style="left:179.5px">B</div>
<div class="ch" style="left:307.5px">C</div>
<div class="ch" style="left:435.5px;color:#217346;-webkit-text-stroke-color:#d2d2d2">D</div>
<div class="ch" style="left:563.5px">E</div>
<div class="ch" style="left:691.5px">F</div>
<div class="ch" style="left:819.5px">G</div>
<div class="ch" style="left:947.5px">H</div>
<div class="ch" style="left:1075.5px">I</div>
<div class="ch" style="left:1203.5px">J</div>
<div class="ch" style="left:1331.5px">K</div>
<div class="ch" style="left:1459.5px">L</div>
<div class="rh" style="top:33px">1</div>
<div class="c" style="left:55px;top:33px">X</div>
<div class="c" style="left:183px;top:33px">Y</div>
<div class="rh" style="top:66px;color:#217346;-webkit-text-stroke-color:#d2d2d2">2</div>
<div class="c r" style="left:51px;width:123px;top:66px">-1.81</div>
<div class="c r" style="left:179px;width:123px;top:66px">1.485203</div>
<div class="rh" style="top:99px">3</div>
<div class="c r" style="left:51px;width:123px;top:99px">-1.8</div>
<div class="c r" style="left:179px;width:123px;top:99px">1.361602</div>
<div class="rh" style="top:132px">4</div>
<div class="c r" style="left:51px;width:123px;top:132px">-1.79</div>
<div class="c r" style="left:179px;width:123px;top:132px">1.325642</div>
<div class="rh" style="top:165px">5</div>
<div class="c r" style="left:51px;width:123px;top:165px">-1.78</div>
<div class="c r" style="left:179px;width:123px;top:165px">1.295539</div>
<div class="rh" style="top:198px">6</div>
<div class="c r" style="left:51px;width:123px;top:198px">-1.77</div>
<div class="c r" style="left:179px;width:123px;top:198px">1.269045</div>
<div class="rh" style="top:231px">7</div>
<div class="c r" style="left:51px;width:123px;top:231px">-1.76</div>
<div class="c r" style="left:179px;width:123px;top:231px">1.24508</div>
<div class="rh" style="top:264px">8</div>
<div class="c r" style="left:51px;width:123px;top:264px">-1.75</div>
<div class="c r" style="left:179px;width:123px;top:264px">1.223026</div>
<div class="rh" style="top:297px">9</div>
<div class="c r" style="left:51px;width:123px;top:297px">-1.74</div>
<div class="c r" style="left:179px;width:123px;top:297px">1.202486</div>
<div class="rh" style="top:330px">10</div>
<div class="c r" style="left:51px;width:123px;top:330px">-1.73</div>
<div class="c r" style="left:179px;width:123px;top:330px">1.183192</div>
<div class="rh" style="top:363px">11</div>
<div class="c r" style="left:51px;width:123px;top:363px">-1.72</div>
<div class="c r" style="left:179px;width:123px;top:363px">1.164947</div>
<div class="rh" style="top:396px">12</div>
<div class="c r" style="left:51px;width:123px;top:396px">-1.71</div>
<div class="c r" style="left:179px;width:123px;top:396px">1.147605</div>
<div class="rh" style="top:429px">13</div>
<div class="c r" style="left:51px;width:123px;top:429px">-1.7</div>
<div class="c r" style="left:179px;width:123px;top:429px">1.131051</div>
<div class="rh" style="top:462px">14</div>
<div class="c r" style="left:51px;width:123px;top:462px">-1.69</div>
<div class="c r" style="left:179px;width:123px;top:462px">1.115196</div>
<div class="rh" style="top:495px">15</div>
<div class="c r" style="left:51px;width:123px;top:495px">-1.68</div>
<div class="c r" style="left:179px;width:123px;top:495px">1.099966</div>
<div class="rh" style="top:528px">16</div>
<div class="c r" style="left:51px;width:123px;top:528px">-1.67</div>
<div class="c r" style="left:179px;width:123px;top:528px">1.085301</div>
<div class="rh" style="top:561px">17</div>
<div class="c r" style="left:51px;width:123px;top:561px">-1.66</div>
<div class="c r" style="left:179px;width:123px;top:561px">1.07115</div>
<div class="rh" style="top:594px">18</div>
<div class="c r" style="left:51px;width:123px;top:594px">-1.65</div>
<div class="c r" style="left:179px;width:123px;top:594px">1.05747</div>
<div class="rh" style="top:627px">19</div>
<div class="c r" style="left:51px;width:123px;top:627px">-1.64</div>
<div class="c r" style="left:179px;width:123px;top:627px">1.044224</div>
<div class="rh" style="top:660px">20</div>
<div class="c r" style="left:51px;width:123px;top:660px">-1.63</div>
<div class="c r" style="left:179px;width:123px;top:660px">1.031381</div>
<div class="rh" style="top:693px">21</div>
<div class="c r" style="left:51px;width:123px;top:693px">-1.62</div>
<div class="c r" style="left:179px;width:123px;top:693px">1.018912</div>
<div class="rh" style="top:726px">22</div>
<div class="c r" style="left:51px;width:123px;top:726px">-1.61</div>
<div class="c r" style="left:179px;width:123px;top:726px">1.006793</div>
<div class="rh" style="top:759px">23</div>
<div class="c r" style="left:51px;width:123px;top:759px">-1.6</div>
<div class="c r" style="left:179px;width:123px;top:759px">0.995003</div>
<div class="rh" style="top:792px">24</div>
<div class="c r" style="left:51px;width:123px;top:792px">-1.59</div>
<div class="c r" style="left:179px;width:123px;top:792px">0.983521</div>
<div class="c r" style="left:435px;width:123px;top:66px">0.1</div>
<div class="abs" style="left:433px;top:64px;width:131px;height:36px;border:2px solid #217346;box-sizing:border-box"></div>
<div class="abs" style="left:557px;top:93px;width:9px;height:9px;background:#217346;border:1px solid #fff;box-sizing:border-box"></div>
<div class="abs" style="left:690px;top:295px;width:848px;height:507px;background:#fff"></div>
<svg class="abs" style="left:0;top:0" width="1563" height="826" viewBox="0 310 1563 826"><g fill="#d9d9d9" shape-rendering="crispEdges"><rect x="795" y="607" width="2" height="504"/><rect x="901" y="607" width="2" height="504"/><rect x="1006" y="607" width="2" height="504"/><rect x="1112" y="607" width="2" height="504"/><rect x="1217" y="607" width="2" height="504"/><rect x="1323" y="607" width="2" height="504"/><rect x="1428" y="607" width="2" height="504"/><rect x="1534" y="607" width="2" height="504"/><rect x="691" y="607" width="845" height="2"/><rect x="691" y="658" width="845" height="2"/><rect x="691" y="708" width="845" height="2"/><rect x="691" y="758" width="845" height="2"/><rect x="691" y="809" width="845" height="2"/><rect x="691" y="859" width="845" height="2"/><rect x="691" y="909" width="845" height="2"/><rect x="691" y="959" width="845" height="2"/><rect x="691" y="1010" width="845" height="2"/><rect x="691" y="1060" width="845" height="2"/><rect x="690" y="605" width="848" height="2"/><rect x="690" y="1110" width="848" height="2"/><rect x="690" y="605" width="2" height="507"/><rect x="1536" y="605" width="2" height="507"/></g><clipPath id="pc"><rect x="692" y="607" width="844" height="503"/></clipPath><path d="M731.6,737.8 L733.7,768.9 L735.8,777.9 L738.0,785.5 L740.1,792.2 L742.2,798.2 L744.3,803.7 L746.4,808.9 L748.5,813.7 L750.6,818.3 L752.7,822.7 L754.8,826.8 L756.9,830.8 L759.0,834.6 L761.1,838.3 L763.2,841.9 L765.3,845.3 L767.5,848.6 L769.6,851.9 L771.7,855.0 L773.8,858.0 L775.9,861.0 L778.0,863.9 L780.1,866.7 L782.2,869.4 L784.3,872.1 L786.4,874.7 L788.5,877.3 L790.6,879.8 L792.7,882.2 L794.8,884.6 L797.0,887.0 L799.1,889.3 L801.2,891.5 L803.3,893.7 L805.4,895.9 L807.5,898.0 L809.6,900.1 L811.7,902.1 L813.8,904.1 L815.9,906.1 L818.0,908.0 L820.1,909.9 L822.2,911.8 L824.3,913.6 L826.4,915.4 L828.6,917.2 L830.7,919.0 L832.8,920.7 L834.9,922.4 L837.0,924.0 L839.1,925.7 L841.2,927.3 L843.3,928.9 L845.4,930.4 L847.5,932.0 L849.6,933.5 L851.7,935.0 L853.8,936.5 L855.9,938.0 L858.1,939.4 L860.2,940.8 L862.3,942.2 L864.4,943.6 L866.5,944.9 L868.6,946.3 L870.7,947.6 L872.8,948.9 L874.9,950.2 L877.0,951.5 L879.1,952.8 L881.2,954.0 L883.3,955.2 L885.4,956.5 L887.6,957.7 L889.7,958.8 L891.8,960.0 L893.9,961.2 L896.0,962.3 L898.1,963.5 L900.2,964.6 L902.3,965.7 L904.4,966.8 L906.5,967.9 L908.6,969.0 L910.7,970.1 L912.8,971.1 L914.9,972.2 L917.0,973.3 L919.2,974.3 L921.3,975.3 L923.4,976.3 L925.5,977.4 L927.6,978.4 L929.7,979.4 L931.8,980.4 L933.9,981.3 L936.0,982.3 L938.1,983.3 L940.2,984.3 L942.3,985.2 L944.4,986.2 L946.5,987.2 L948.7,988.1 L950.8,989.1 L952.9,990.0 L955.0,990.9 L957.1,991.9 L959.2,992.8 L961.3,993.7 L963.4,994.7 L965.5,995.6 L967.6,996.5 L969.7,997.5 L971.8,998.4 L973.9,999.3 L976.0,1000.3 L978.2,1001.2 L980.3,1002.1 L982.4,1003.0 L984.5,1004.0 L986.6,1004.9 L988.7,1005.9 L990.8,1006.8 L992.9,1007.7 L995.0,1008.7 L997.1,1009.6 L999.2,1010.6 L1001.3,1011.6 L1003.4,1012.5 L1005.5,1013.5 L1007.6,1014.5 L1009.8,1015.5 L1011.9,1016.5 L1014.0,1017.5 L1016.1,1018.5 L1018.2,1019.5 L1020.3,1020.6 L1022.4,1021.6 L1024.5,1022.7 L1026.6,1023.7 L1028.7,1024.8 L1030.8,1025.9 L1032.9,1027.0 L1035.0,1028.2 L1037.1,1029.3 L1039.3,1030.4 L1041.4,1031.6 L1043.5,1032.8 L1045.6,1034.0 L1047.7,1035.3 L1049.8,1036.5 L1051.9,1037.8 L1054.0,1039.1 L1056.1,1040.5 L1058.2,1041.8 L1060.3,1043.2 L1062.4,1044.6 L1064.5,1046.1 L1066.6,1047.6 L1068.8,1049.1 L1070.9,1050.7 L1073.0,1052.3 L1075.1,1054.0 L1077.2,1055.7 L1079.3,1057.5 L1081.4,1059.4 L1083.5,1061.3 L1085.6,1063.3 L1087.7,1065.3 L1089.8,1067.5 L1091.9,1069.8 L1094.0,1072.1 L1096.1,1074.7 L1098.3,1077.4 L1100.4,1080.2 L1102.5,1083.3 L1104.6,1086.8 L1106.7,1090.6 L1108.8,1095.1 L1110.9,1100.6 L1113.0,1111.0 L1115.1,1098.0 L1117.2,1089.9 L1119.3,1082.9 L1121.4,1076.5 L1123.5,1070.5 L1125.6,1064.8 L1127.7,1059.3 L1129.9,1054.0 L1132.0,1048.9 L1134.1,1044.0 L1136.2,1039.2 L1138.3,1034.4 L1140.4,1029.8 L1142.5,1025.3 L1144.6,1020.8 L1146.7,1016.4 L1148.8,1012.1 L1150.9,1007.8 L1153.0,1003.6 L1155.1,999.4 L1157.2,995.3 L1159.4,991.3 L1161.5,987.3 L1163.6,983.3 L1165.7,979.4 L1167.8,975.5 L1169.9,971.6 L1172.0,967.8 L1174.1,964.0 L1176.2,960.3 L1178.3,956.6 L1180.4,952.9 L1182.5,949.2 L1184.6,945.6 L1186.7,942.0 L1188.9,938.4 L1191.0,934.9 L1193.1,931.3 L1195.2,927.9 L1197.3,924.4 L1199.4,920.9 L1201.5,917.5 L1203.6,914.1 L1205.7,910.7 L1207.8,907.4 L1209.9,904.1 L1212.0,900.7 L1214.1,897.5 L1216.2,894.2 L1218.3,890.9 L1220.5,887.7 L1222.6,884.5 L1224.7,881.3 L1226.8,878.2 L1228.9,875.0 L1231.0,871.9 L1233.1,868.8 L1235.2,865.7 L1237.3,862.7 L1239.4,859.6 L1241.5,856.6 L1243.6,853.6 L1245.7,850.6 L1247.8,847.6 L1250.0,844.7 L1252.1,841.8 L1254.2,838.8 L1256.3,836.0 L1258.4,833.1 L1260.5,830.2 L1262.6,827.4 L1264.7,824.6 L1266.8,821.8 L1268.9,819.0 L1271.0,816.3 L1273.1,813.5 L1275.2,810.8 L1277.3,808.1 L1279.5,805.4 L1281.6,802.8 L1283.7,800.1 L1285.8,797.5 L1287.9,794.9 L1290.0,792.3 L1292.1,789.8 L1294.2,787.2 L1296.3,784.7 L1298.4,782.2 L1300.5,779.7 L1302.6,777.2 L1304.7,774.8 L1306.8,772.4 L1309.0,770.0 L1311.1,767.6 L1313.2,765.2 L1315.3,762.9 L1317.4,760.6 L1319.5,758.3 L1321.6,756.0 L1323.7,753.8 L1325.8,751.5 L1327.9,749.3 L1330.0,747.2 L1332.1,745.0 L1334.2,742.9 L1336.3,740.8 L1338.4,738.7 L1340.6,736.6 L1342.7,734.6 L1344.8,732.5 L1346.9,730.5 L1349.0,728.6 L1351.1,726.6 L1353.2,724.7 L1355.3,722.8 L1357.4,720.9 L1359.5,719.1 L1361.6,717.3 L1363.7,715.5 L1365.8,713.8 L1367.9,712.0 L1370.1,710.3 L1372.2,708.6 L1374.3,707.0 L1376.4,705.4 L1378.5,703.8 L1380.6,702.2 L1382.7,700.7 L1384.8,699.2 L1386.9,697.8 L1389.0,696.4 L1391.1,695.0 L1393.2,693.6 L1395.3,692.3 L1397.4,691.0 L1399.6,689.7 L1401.7,688.5 L1403.8,687.4 L1405.9,686.2 L1408.0,685.1 L1410.1,684.1 L1412.2,683.0 L1414.3,682.1 L1416.4,681.1 L1418.5,680.3 L1420.6,679.4 L1422.7,678.6 L1424.8,677.9 L1426.9,677.2 L1429.0,676.6 L1431.2,676.0 L1433.3,675.5 L1435.4,675.0 L1437.5,674.6 L1439.6,674.3 L1441.7,674.0 L1443.8,673.8 L1445.9,673.6 L1448.0,673.6 L1450.1,673.6 L1452.2,673.7 L1454.3,673.9 L1456.4,674.2 L1458.5,674.5 L1460.7,675.0 L1462.8,675.6 L1464.9,676.4 L1467.0,677.2 L1469.1,678.2 L1471.2,679.4 L1473.3,680.8 L1475.4,682.3 L1477.5,684.1 L1479.6,686.2 L1481.7,688.6 L1483.8,691.3 L1485.9,694.6 L1488.0,698.5 L1490.2,703.3 L1492.3,709.5 L1494.4,719.0" fill="none" stroke="#5b9bd5" stroke-width="3.9" stroke-linejoin="round" stroke-linecap="round" clip-path="url(#pc)"/></svg>
</div>
</body></html>
